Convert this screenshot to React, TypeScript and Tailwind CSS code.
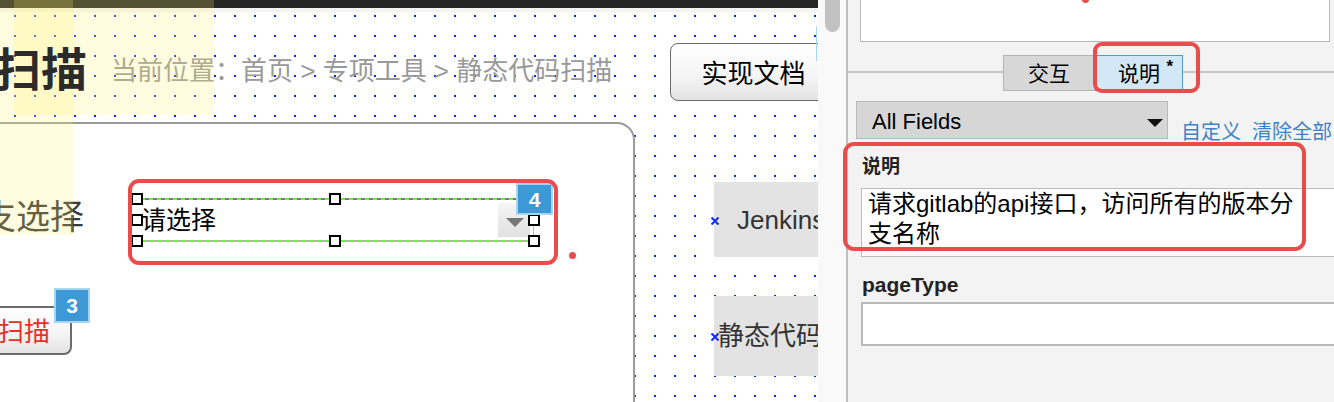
import React from "react";

const FONT = "font-['Liberation_Sans','Noto_Sans_CJK_SC',sans-serif]";

function Cross({ className }: { className: string }) {
    return (
        <svg className={`absolute ${className}`} width="10" height="10" viewBox="0 0 10 10">
            <path d="M1.5 1.5l7 7M8.5 1.5l-7 7" stroke="#0f2cff" strokeWidth="2" />
        </svg>
    );
}

function Badge({ label, className }: { label: string; className: string }) {
    return (
        <div
            className={`absolute flex items-center justify-center border-2 border-[#a6d5f0] bg-[#3d99d6] text-[21px] leading-none font-bold text-white ${className}`}
        >
            {label}
        </div>
    );
}

// selection handles around the picked widget
const handles = [
    "left-[131px] top-[193px]",
    "left-[329px] top-[193px]",
    "left-[528px] top-[193px]",
    "left-[131px] top-[214px]",
    "left-[528px] top-[214px]",
    "left-[131px] top-[235px]",
    "left-[329px] top-[235px]",
    "left-[528px] top-[235px]",
];

function Canvas() {
    return (
        <div className="relative h-full w-[818px] shrink-0 overflow-hidden bg-white bg-[radial-gradient(circle,#0b27ff_1px,transparent_1.5px)] bg-[size:20px_20px] bg-[position:5px_6px]">
            <div className="absolute inset-x-0 top-0 h-[8px] bg-[#262626]" />
            <div className="absolute inset-x-0 top-[8px] h-[4px] bg-[#f4f4f4]" />

            <p className="absolute left-[111px] top-[58px] whitespace-nowrap text-[26px] leading-[26px] text-[#999]">
                当前位置：首页 &gt; 专项工具 &gt; 静态代码扫描
            </p>

            <button className="absolute left-[670px] top-[43px] flex h-[58px] w-[167px] items-center justify-center rounded-[8px] border-[1.5px] border-[#6b6b6b] bg-[linear-gradient(#ffffff,#f5f5f5_55%,#e3e3e3)] pt-[4px] text-[26px] leading-[26px] text-black">
                实现文档
            </button>
            <div className="absolute left-[816px] top-[26px] h-[35px] w-px bg-[#a9d5f2]" />

            {/* main form panel */}
            <div className="absolute left-[-20px] top-[122px] h-[320px] w-[655px] rounded-tr-[18px] border-2 border-[#9b9b9b] bg-white" />

            <span className="absolute left-[-18px] top-[200px] whitespace-nowrap text-[34px] leading-[34px] text-[#3a3a3a]">支选择</span>

            <div className="absolute left-[137px] top-[199px] flex h-[42px] w-[396px] items-center bg-white pl-[4px] pr-[3px]">
                <div className="absolute inset-x-0 top-[-1px] h-[2px] bg-[repeating-linear-gradient(90deg,#7a7a7a_0_4px,#6cf03a_4px_8px)]" />
                <div className="absolute inset-x-0 bottom-[-1px] h-[2px] bg-[repeating-linear-gradient(90deg,#b0b0b0_0_4px,#6cf03a_4px_8px)]" />
                <div className="absolute right-[-1px] top-0 bottom-0 w-[1px] bg-[#7cf04e]" />
                <span className="text-[25px] leading-[25px] text-black">请选择</span>
                <div className="ml-auto flex h-[34px] w-[32px] items-center justify-center bg-[linear-gradient(#f5f5f5,#e1e1e1)]">
                    <svg className="mt-[5px] ml-[2px]" width="18" height="9" viewBox="0 0 18 9">
                        <path d="M0 0h18L9 9z" fill="#777" />
                    </svg>
                </div>
            </div>
            {handles.map((h) => (
                <div key={h} className={`absolute h-[12px] w-[12px] border-2 border-black bg-white ${h}`} />
            ))}
            <Badge label="4" className="left-[516px] top-[183px] h-[32px] w-[37px]" />
            <div className="absolute left-[128px] top-[179px] h-[86px] w-[430px] rounded-[11px] border-4 border-[#ea4b4b]" />
            <div className="absolute left-[569px] top-[252px] h-[7px] w-[7px] rounded-full bg-[#ea4b4b]" />

            <button className="absolute left-[-24px] top-[306px] flex h-[49px] w-[96px] items-center justify-center rounded-[8px] border-2 border-[#6b6b6b] bg-[linear-gradient(#ffffff,#f5f5f5_55%,#e3e3e3)] pt-[3px] text-[26px] leading-[26px] text-[#e8302a]">
                扫描
            </button>
            <Badge label="3" className="left-[54px] top-[288px] h-[35px] w-[36px]" />

            <div className="absolute left-[714px] top-[182px] flex h-[75px] w-[130px] items-center bg-[#e3e3e3] pl-[23px] text-[26px] leading-none text-[#333]">
                Jenkins
            </div>
            <Cross className="left-[710px] top-[216px]" />
            <div className="absolute left-[714px] top-[296px] flex h-[80px] w-[130px] items-center whitespace-nowrap bg-[#e3e3e3] pl-[4px] text-[26px] leading-none text-[#333]">
                静态代码扫描
            </div>
            <Cross className="left-[710px] top-[332px]" />

            {/* yellow highlight overlays */}
            <div className="absolute left-0 top-0 h-[115px] w-[214px] bg-[rgba(255,240,106,0.21)]" />
            <div className="absolute left-[14px] top-0 h-[115px] w-[59px] bg-[rgba(255,240,106,0.21)]" />
            <div className="absolute left-0 top-[115px] h-[120px] w-[73px] bg-[rgba(255,240,106,0.21)]" />

            <h1 className="absolute left-[-5px] top-[47px] text-[46px] leading-[46px] font-bold text-[#2b2b2b]">扫描</h1>
        </div>
    );
}

function Inspector() {
    return (
        <div className="relative h-full flex-1 border-l-2 border-[#c0c0c0] bg-[#f3f3f3]">
            <div className="ml-[12px] mr-[4px] h-[42px] border-x-[1.5px] border-b-[1.5px] border-[#b8b8b8] bg-white" />

            <div className="relative h-[59px]">
                <div className="absolute inset-x-0 top-[29px] h-[2px] bg-[#c6c6c6]" />
                <div className="relative flex pl-[155px] pt-[13px]">
                    <div className="flex h-[36px] w-[92px] items-center justify-center border-[1.5px] border-[#b3b3b3] bg-[#d7d7d7] text-[21px] leading-none text-black">
                        交互
                    </div>
                    <div className="relative flex h-[36px] w-[88px] items-center justify-center border-[1.5px] border-[#4b9bd6] bg-[#d3e8f6] text-[21px] leading-none text-black">
                        说明
                        <span className="absolute right-[9px] top-[2px] text-[17px] font-bold">*</span>
                    </div>
                </div>
            </div>

            <div className="flex items-end whitespace-nowrap pl-[8px]">
                <div className="flex h-[38px] w-[312px] shrink-0 items-center border-[1.5px] border-[#b9b9b9] bg-[#d6d6d6] pl-[15px] pr-[4px]">
                    <span className="pt-[3px] text-[22px] leading-none text-black">All Fields</span>
                    <svg className="ml-auto mt-[6px]" width="16" height="8" viewBox="0 0 16 8">
                        <path d="M0 0h16L8 8z" fill="#111" />
                    </svg>
                </div>
                <span className="ml-[13px] shrink-0 translate-y-[3px] text-[20px] leading-[20px] text-[#3f82c6]">自定义</span>
                <span className="ml-[11px] shrink-0 translate-y-[3px] text-[20px] leading-[20px] text-[#3f82c6]">清除全部</span>
            </div>

            <div className="mt-[16px] pl-[14px] text-[19px] leading-[24px] font-bold text-[#222]">说明</div>
            <div className="mt-[9px] ml-[13px] h-[69px] border-y-[1.5px] border-l-[1.5px] border-[#bababa] bg-white pl-[6px]">
                <p className="w-[432px] text-[24px] leading-[30px] text-black">请求gitlab的api接口，访问所有的版本分支名称</p>
            </div>

            <div className="mt-[15px] pl-[14px] text-[21px] leading-[26px] font-bold text-[#222]">pageType</div>
            <div className="mt-[4px] ml-[13px] h-[44px] border-y-2 border-l-2 border-[#bababa] bg-white" />

            <div className="absolute left-[234px] top-[-4px] h-[7px] w-[7px] rounded-full bg-[#ea4b4b]" />
            <div className="absolute left-[245px] top-[42px] h-[51px] w-[107px] rounded-[9px] border-4 border-[#ea4b4b]" />
            <div className="absolute left-[-5px] top-[142px] h-[109px] w-[463px] rounded-[11px] border-4 border-[#ea4b4b]" />
        </div>
    );
}

export default function App() {
    return (
        <div className={`flex h-[402px] w-[1334px] overflow-hidden bg-white ${FONT}`}>
            <Canvas />
            <div className="w-[28px] shrink-0 bg-[#f9f9f9]">
                <div className="ml-[7px] h-[32px] w-[15px] rounded-b-[8px] bg-[#c2c2c2]" />
            </div>
            <Inspector />
        </div>
    );
}
